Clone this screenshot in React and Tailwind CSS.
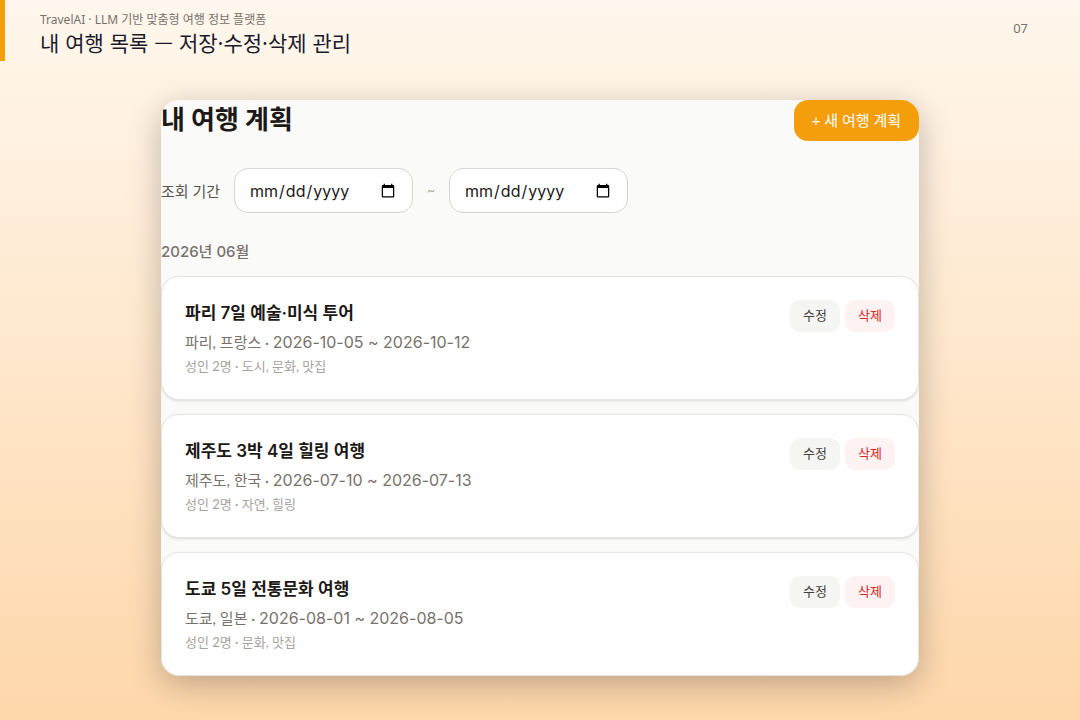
import React, { useState } from 'react';

const initialTrips = [
  { id: 1, title: '파리 7일 예술·미식 투어', place: '파리, 프랑스', from: '2026-10-05', to: '2026-10-12', people: '성인 2명', themes: '도시, 문화, 맛집' },
  { id: 2, title: '제주도 3박 4일 힐링 여행', place: '제주도, 한국', from: '2026-07-10', to: '2026-07-13', people: '성인 2명', themes: '자연, 힐링' },
  { id: 3, title: '도쿄 5일 전통문화 여행', place: '도쿄, 일본', from: '2026-08-01', to: '2026-08-05', people: '성인 2명', themes: '문화, 맛집' },
];

function SlideHeader() {
  return (
    <header className="flex items-start justify-between border-l-[5px] border-[#f59e0b] h-[61px] pl-[35px] pr-[52px] font-['Noto_Sans','Noto_Sans_CJK_KR',sans-serif]">
      <div className="pt-3">
        <p className="text-[12px] leading-4 text-[#78716c]">TravelAI · LLM 기반 맞춤형 여행 정보 플랫폼</p>
        <h1 className="text-[21px] leading-7 font-['Noto_Sans_CJK_KR',sans-serif] text-[#1a1a2e]">내 여행 목록 — 저장·수정·삭제 관리</h1>
      </div>
      <span className="pt-[18px] text-[13px] leading-5 text-[#78716c]">07</span>
    </header>
  );
}

function DateInput({ label, value, onChange }) {
  return (
    <input
      type="date"
      aria-label={label}
      value={value}
      onChange={e => onChange(e.target.value)}
      className="w-[179px] h-[45px] px-3.5 rounded-[14px] border border-[#d6d3d1] bg-white font-['Inter',sans-serif] text-[16px] text-[#1c1917]"
    />
  );
}

function TripCard({ trip, onDelete }) {
  return (
    <li className="flex items-start justify-between p-[23px] rounded-[18px] border border-[#e7e5e4] bg-white shadow-sm">
      <div>
        <h3 className="text-[17px] leading-[26px] font-semibold font-['Inter','Noto_Sans_CJK_KR',sans-serif] text-[#1c1917]">{trip.title}</h3>
        <p className="mt-1 text-[15px] leading-6 text-[#78716c]">
          {trip.place} · <span className="font-['Inter',sans-serif] text-[16px]">{trip.from} ~ {trip.to}</span>
        </p>
        <p className="mt-0.5 text-[13px] leading-5 text-[#a8a29e]">{trip.people} · {trip.themes}</p>
      </div>
      <div className="flex gap-[5px]">
        <button type="button" className="w-[50px] h-8 rounded-[10px] bg-[#f5f5f4] text-[13px] text-[#44403c]">수정</button>
        <button type="button" onClick={() => onDelete(trip.id)} className="w-[50px] h-8 rounded-[10px] bg-[#fef2f2] text-[13px] text-[#dc2626]">삭제</button>
      </div>
    </li>
  );
}

function App() {
  const [trips, setTrips] = useState(initialTrips);
  const [startDate, setStartDate] = useState('');
  const [endDate,   setEndDate]   = useState('');

  const handleDelete = (id) => setTrips(prev => prev.filter(t => t.id !== id));

  return (
    <div lang="ko" className="min-h-screen bg-linear-to-b from-[#fff7ed] to-[#fed7aa]">
      <SlideHeader />

      <main className="mx-auto mt-[39px] w-full max-w-[758px] overflow-hidden rounded-[18px] bg-[#fafaf9] shadow-[0_8px_32px_rgba(0,0,0,0.25)] font-['Lato','Noto_Sans_CJK_KR',sans-serif]">
        <div className="flex items-start justify-between">
          <h2 className="text-[26px] leading-10 font-bold font-['Inter','Noto_Sans_CJK_KR',sans-serif] text-[#1c1917]">내 여행 계획</h2>
          <button type="button" className="h-[41px] px-[18px] rounded-[14px] bg-[#f59e0b] text-[15px] text-white">
            + 새 여행 계획
          </button>
        </div>

        <div className="mt-[27px] flex items-center">
          <span className="mr-3.5 text-[15px] leading-6 text-[#57534e]">조회 기간</span>
          <DateInput label="시작일" value={startDate} onChange={setStartDate} />
          <span className="w-9 text-center text-[13px] text-[#a8a29e]">~</span>
          <DateInput label="종료일" value={endDate} onChange={setEndDate} />
        </div>

        <section className="mt-[27px]">
          <h3 className="text-[15px] leading-6 font-medium font-['Inter','Noto_Sans_CJK_KR',sans-serif] text-[#78716c]">2026년 06월</h3>
          <ul className="mt-3 space-y-3.5">
            {trips.map(trip => (
              <TripCard key={trip.id} trip={trip} onDelete={handleDelete} />
            ))}
          </ul>
        </section>
      </main>
    </div>
  );
}

export default App;
